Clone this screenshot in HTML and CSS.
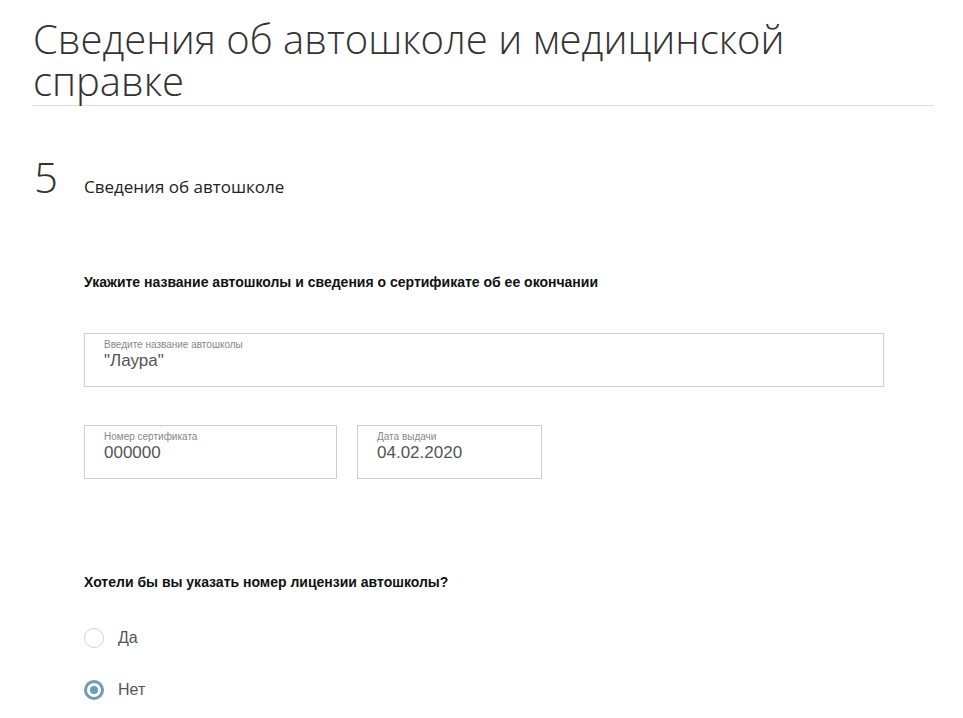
FILE: index.html
```html
<!DOCTYPE html>
<html lang="ru">
<head>
<meta charset="utf-8">
<link rel="stylesheet" href="styles.css">
</head>
<body>
<div class="page">
  <h1 class="title">Сведения об автошколе и медицинской справке</h1>
  <div class="step">
    <span class="step-num">5</span>
    <span class="step-name">Сведения об автошколе</span>
  </div>
  <div class="form">
    <p class="q">Укажите название автошколы и сведения о сертификате об ее окончании</p>
    <div class="field field-wide">
      <span class="label">Введите название автошколы</span>
      <span class="value">"Лаура"</span>
    </div>
    <div class="row">
      <div class="field field-num">
        <span class="label">Номер сертификата</span>
        <span class="value">000000</span>
      </div>
      <div class="field field-date">
        <span class="label">Дата выдачи</span>
        <span class="value">04.02.2020</span>
      </div>
    </div>
    <p class="q q2">Хотели бы вы указать номер лицензии автошколы?</p>
    <div class="radio"><span class="dot"></span><span class="rlabel">Да</span></div>
    <div class="radio"><span class="dot checked"></span><span class="rlabel">Нет</span></div>
  </div>
</div>
</body>
</html>
```
FILE: styles.css
```css
html, body { margin: 0; padding: 0; background: #fff; }
body { font-family: "Liberation Sans", Arial, sans-serif; }
.page { padding: 18px 29px 0 33px; }
.title {
  margin: 0;
  font-family: "Open Sans", sans-serif;
  font-weight: 300;
  font-size: 40px;
  line-height: 42px;
  color: #333;
  padding-bottom: 3px;
  border-bottom: 1px solid #dedede;
  letter-spacing: 0;
}
.step { display: flex; align-items: baseline; margin-top: 50px; }
.step-num {
  font-family: "Open Sans", sans-serif;
  font-weight: 300;
  font-size: 42px;
  line-height: 42px;
  color: #333;
  width: 50px;
  padding-left: 1px;
}
.step-name {
  font-family: "Open Sans", sans-serif;
  font-size: 17px;
  color: #222;
}
.form { padding-left: 51px; }
.q {
  margin: 0;
  font-weight: bold;
  font-size: 14px;
  line-height: 16px;
  color: #111;
}
.form > .q:first-child { margin-top: 76px; }
.field {
  box-sizing: border-box;
  height: 54px;
  border: 1px solid #cfcfcf;
  padding: 5px 19px 0;
  display: flex;
  flex-direction: column;
}
.field-wide { width: 800px; margin-top: 43px; }
.row { display: flex; gap: 20px; margin-top: 38px; }
.field-num { width: 253px; }
.field-date { width: 185px; }
.label { font-size: 10px; line-height: 12px; color: #888; }
.value { font-size: 17px; line-height: 20px; color: #555; }
.q2 { margin-top: 95px; }
.radio { display: flex; align-items: center; height: 22px; margin-top: 31px; }
.radio + .radio { margin-top: 30px; }
.q2 + .radio { margin-top: 37px; }
.dot {
  box-sizing: border-box;
  width: 20px; height: 20px;
  border-radius: 50%;
  border: 1px solid #d4d4d4;
  margin-right: 14px;
  position: relative;
}
.dot.checked { border: 3px solid #6d9bb8; }
.dot.checked::after {
  content: "";
  position: absolute;
  left: 3px; top: 3px;
  width: 8px; height: 8px;
  border-radius: 50%;
  background: #6d9bb8;
}
.rlabel { font-size: 16px; color: #555; }
```
